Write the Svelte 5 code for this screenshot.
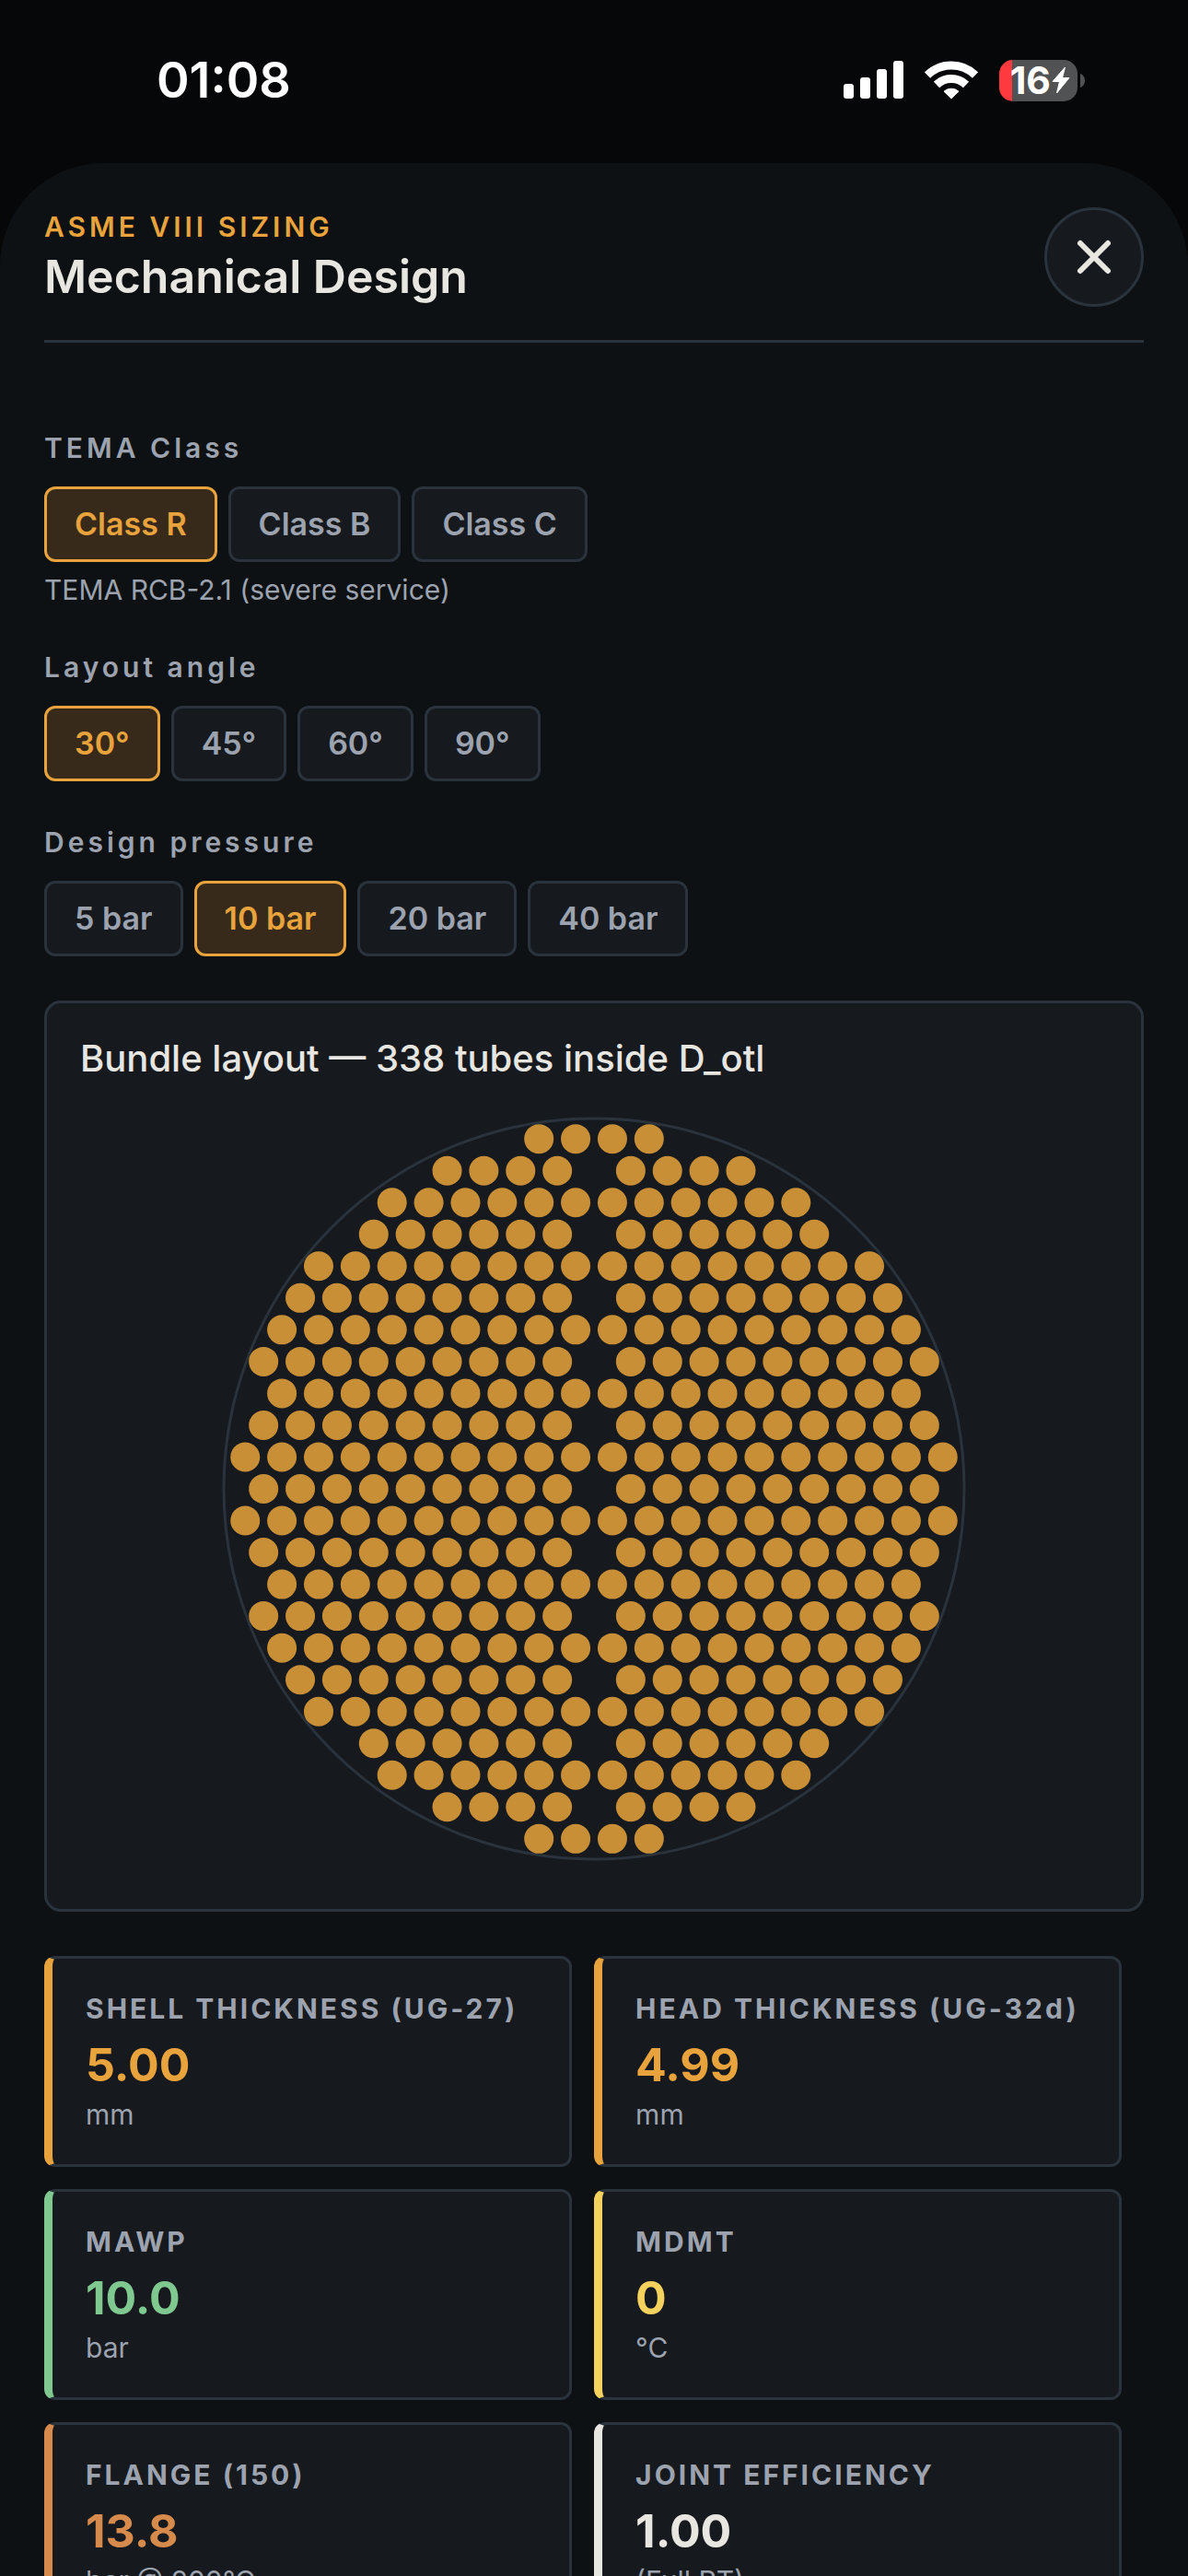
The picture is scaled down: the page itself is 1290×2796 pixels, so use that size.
<script lang="ts">
  type Option = {
    label: string;
    note?: string;
  };

  type Result = {
    label: string;
    value: string;
    unit: string;
    color: string;
  };

  const classes: Option[] = [
    { label: 'Class R', note: 'TEMA RCB-2.1 (severe service)' },
    { label: 'Class B', note: 'TEMA RCB-2.1 (chemical service)' },
    { label: 'Class C', note: 'TEMA RCB-2.1 (general service)' },
  ];

  const angles: Option[] = [
    { label: '30°' },
    { label: '45°' },
    { label: '60°' },
    { label: '90°' },
  ];

  const pressures: Option[] = [
    { label: '5 bar' },
    { label: '10 bar' },
    { label: '20 bar' },
    { label: '40 bar' },
  ];

  const results: Result[] = [
    { label: 'SHELL THICKNESS (UG-27)', value: '5.00', unit: 'mm', color: '#e8a33d' },
    { label: 'HEAD THICKNESS (UG-32d)', value: '4.99', unit: 'mm', color: '#e8a33d' },
    { label: 'MAWP', value: '10.0', unit: 'bar', color: '#7fc88f' },
    { label: 'MDMT', value: '0', unit: '°C', color: '#f5d15e' },
    { label: 'FLANGE (150)', value: '13.8', unit: 'bar @ 200°C', color: '#d68a4c' },
    { label: 'JOINT EFFICIENCY', value: '1.00', unit: '(Full RT)', color: '#e8e6e1' },
  ];

  let temaClass = $state('Class R');
  let angle = $state('30°');
  let pressure = $state('10 bar');
  let isOpen = $state(true);

  let classNote = $derived(classes.find((c) => c.label === temaClass)?.note);

  // Triangular pitch, clipped to the outer tube limit, with the centre lane left free
  const size = 840;
  const shellRadius = 402;
  const tubeRadius = 16;
  const pitch = 39.87;
  const limit = 94;

  const tubes: { x: number; y: number }[] = [];
  for (let row = -11; row <= 11; row++) {
    const shift = row % 2 !== 0 ? 0.5 : 0;
    const dy = (row * Math.sqrt(3)) / 2;
    for (let col = -11; col <= 11; col++) {
      const dx = col + shift;
      if (dx === 0 || dx * dx + dy * dy > limit) continue;
      tubes.push({ x: size / 2 + dx * pitch, y: size / 2 + dy * pitch });
    }
  }
</script>

{#snippet chips(title: string, options: Option[], selected: string, onselect: (label: string) => void)}
  <h2 class="group-label">{title}</h2>
  <div class="chips" role="group" aria-label={title}>
    {#each options as option}
      <button
        class="chip"
        class:active={option.label === selected}
        aria-pressed={option.label === selected}
        onclick={() => onselect(option.label)}
      >{option.label}</button>
    {/each}
  </div>
{/snippet}

<div class="screen">
  <div class="status-bar">
    <span class="time">01:08</span>
    <div class="status-icons">
      <svg width="65" height="42" viewBox="0 0 65 42" fill="#fff" aria-hidden="true">
        <rect x="0" y="25" width="11" height="16" rx="3" />
        <rect x="18" y="18" width="11" height="23" rx="3" />
        <rect x="36" y="9" width="11" height="32" rx="3" />
        <rect x="54" y="0" width="11" height="41" rx="3" />
      </svg>
      <svg width="58" height="44" viewBox="0 0 58 44" fill="none" stroke="#fff" aria-hidden="true">
        <path d="M3 16.5A37.5 37.5 0 0 1 55 16.5" stroke-width="9" />
        <path d="M13 27A23 23 0 0 1 45 27" stroke-width="9" />
        <path d="M21 34.200A12 12 0 0 1 37 34.200L29 42Z" fill="#fff" stroke-width="1" stroke-linejoin="round" />
      </svg>
      <div class="battery">
        <div class="battery-body">
          <span>16</span>
          <svg width="20" height="30" viewBox="0 0 20 30" aria-hidden="true">
            <path d="M14.500 1L1 16.500H8.500L5.500 29L19 12.500H11.500Z" fill="#fff" stroke="#fff" stroke-width="1" stroke-linejoin="round" />
          </svg>
        </div>
        <svg width="5" height="15" viewBox="0 0 5 15" aria-hidden="true">
          <path d="M0 0C3 1 5 4 5 7.500S3 14 0 15Z" fill="#515254" />
        </svg>
      </div>
    </div>
  </div>

  {#if isOpen}
    <main class="sheet">
      <header class="sheet-header">
        <div>
          <p class="eyebrow">ASME VIII SIZING</p>
          <h1>Mechanical Design</h1>
        </div>
        <button class="close" aria-label="Close" onclick={() => (isOpen = false)}>
          <svg width="42" height="42" viewBox="0 0 42 42" aria-hidden="true">
            <path d="M6 6L36 36M36 6L6 36" stroke="#e8e6e1" stroke-width="6" stroke-linecap="round" />
          </svg>
        </button>
      </header>

      <section class="group">
        {@render chips('TEMA Class', classes, temaClass, (label) => (temaClass = label))}
        <p class="note">{classNote}</p>
      </section>

      <section class="group">
        {@render chips('Layout angle', angles, angle, (label) => (angle = label))}
      </section>

      <section class="group">
        {@render chips('Design pressure', pressures, pressure, (label) => (pressure = label))}
      </section>

      <section class="bundle">
        <h2>Bundle layout — {tubes.length} tubes inside D_otl</h2>
        <svg viewBox="0 0 {size} {size}" role="img" aria-label="Tube bundle cross-section">
          <circle cx={size / 2} cy={size / 2} r={shellRadius} fill="none" stroke="#2a333c" stroke-width="3" />
          {#each tubes as tube}
            <circle cx={tube.x} cy={tube.y} r={tubeRadius} fill="#c88f37" />
          {/each}
        </svg>
      </section>

      <section class="results">
        {#each results as result}
          <article class="result" style="--accent: {result.color}">
            <h3>{result.label}</h3>
            <p class="value">{result.value}</p>
            <p class="unit">{result.unit}</p>
          </article>
        {/each}
      </section>
    </main>
  {/if}
</div>

<style>
  :global(body) {
    background: #060709;
  }

  .screen {
    display: flex;
    flex-direction: column;
    height: 100vh;
    overflow: hidden;
    background: #060709;
    color: #e8e6e1;
    font-family: Inter, "Liberation Sans", sans-serif;
  }

  h1,
  h2,
  h3,
  p {
    margin: 0;
  }

  button {
    font-family: inherit;
    cursor: pointer;
  }

  .status-bar {
    display: flex;
    flex: none;
    align-items: center;
    justify-content: space-between;
    box-sizing: border-box;
    height: 177px;
    padding: 0 112px 3px 170px;
    color: #fff;
  }

  .time {
    font-size: 54px;
    font-weight: 600;
    line-height: 60px;
  }

  .status-icons {
    display: flex;
    align-items: center;
    gap: 23px;
  }

  .battery {
    display: flex;
    align-items: center;
    gap: 3px;
  }

  .battery-body {
    display: flex;
    align-items: center;
    justify-content: flex-end;
    gap: 1px;
    box-sizing: border-box;
    width: 85px;
    height: 45px;
    padding-right: 8px;
    border-radius: 15px;
    background: linear-gradient(to right, #ff3a3f 14px, #515254 14px);
    font-size: 41px;
    font-weight: 700;
    line-height: 45px;
  }

  .sheet {
    flex: 1;
    min-height: 0;
    overflow-y: auto;
    scrollbar-width: none;
    padding: 48px;
    border-radius: 112px 112px 0 0;
    background: #0d1113;
  }

  .sheet-header {
    display: flex;
    align-items: center;
    justify-content: space-between;
    margin-bottom: 96px;
    padding-bottom: 36px;
    border-bottom: 3px solid #2a333c;
  }

  .eyebrow {
    margin-bottom: 6px;
    color: #e8a33d;
    font-size: 30px;
    font-weight: 600;
    line-height: 36px;
    letter-spacing: 4px;
  }

  h1 {
    font-size: 50px;
    font-weight: 600;
    line-height: 60px;
  }

  .close {
    display: flex;
    align-items: center;
    justify-content: center;
    width: 108px;
    height: 108px;
    padding: 0;
    border: 3px solid #2a333c;
    border-radius: 50%;
    background: #16191e;
  }

  .group {
    margin-bottom: 48px;
  }

  .group-label {
    margin-bottom: 24px;
    color: #9ca3af;
    font-size: 30px;
    font-weight: 600;
    line-height: 36px;
    letter-spacing: 4px;
  }

  .chips {
    display: flex;
    flex-wrap: wrap;
    gap: 12px;
  }

  .chip {
    padding: 18px 30px;
    border: 3px solid #2a333c;
    border-radius: 12px;
    background: #16191e;
    color: #9ca3af;
    font-size: 34px;
    font-weight: 600;
    line-height: 40px;
  }

  .chip.active {
    border-color: #e8a33d;
    background: #372a1b;
    color: #e8a33d;
  }

  .note {
    margin-top: 12px;
    color: #9ca3af;
    font-size: 30px;
    line-height: 36px;
  }

  .bundle {
    padding: 36px;
    border: 3px solid #2a333c;
    border-radius: 18px;
    background: #16191e;
  }

  .bundle h2 {
    margin-bottom: 24px;
    font-size: 40px;
    font-weight: 500;
    line-height: 47px;
  }

  .bundle svg {
    display: block;
    width: 100%;
    max-width: 840px;
    margin: 0 auto;
  }

  .results {
    display: flex;
    flex-wrap: wrap;
    gap: 24px;
    margin-top: 48px;
  }

  .result {
    box-sizing: border-box;
    width: 48%;
    padding: 36px;
    border: 3px solid #2a333c;
    border-left: 9px solid var(--accent);
    border-radius: 12px;
    background: #16191e;
  }

  .result h3 {
    color: #9ca3af;
    font-size: 30px;
    font-weight: 700;
    line-height: 36px;
    letter-spacing: 3px;
    white-space: nowrap;
  }

  .value {
    margin: 13px 0 5px;
    color: var(--accent);
    font-size: 50px;
    font-weight: 700;
    line-height: 61px;
  }

  .unit {
    color: #9ca3af;
    font-size: 30px;
    line-height: 36px;
  }
</style>
